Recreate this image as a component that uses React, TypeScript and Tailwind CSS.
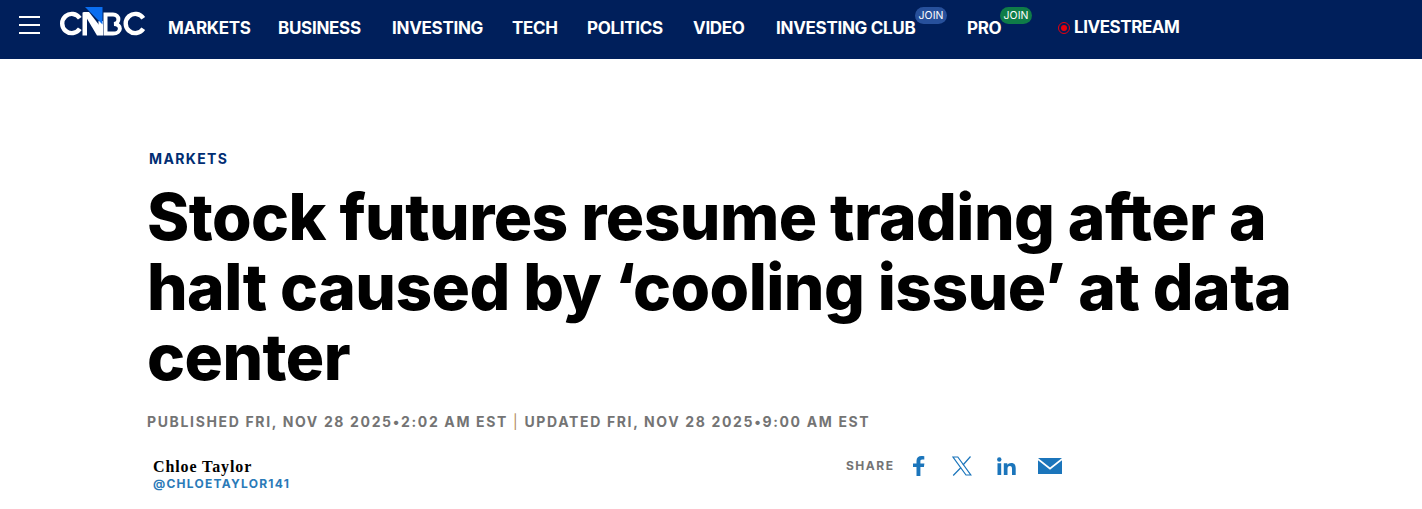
const navItems = [
  { label: 'MARKETS', width: 'w-[110px]' },
  { label: 'BUSINESS', width: 'w-[114px]' },
  { label: 'INVESTING', width: 'w-[120px]' },
  { label: 'TECH', width: 'w-[75px]' },
  { label: 'POLITICS', width: 'w-[106px]' },
  { label: 'VIDEO', width: 'w-[83px]' },
]

const JoinBadge = ({ color, className }: { color: string; className: string }) => (
  <span
    className={`absolute flex h-[17px] w-[32px] items-center justify-center rounded-full text-[10.500px] font-normal tracking-normal text-white ${color} ${className}`}
  >
    JOIN
  </span>
)

const Logo = () => (
  <svg width="87" height="29" viewBox="0 0 87 29">
    <path d="M20.800 11.200A9.600 9.600 0 1 0 20.800 21.800" fill="none" stroke="#fff" strokeWidth="4.400" />
    <path d="M23.500 5.500h4.500v23h-4.500z" fill="#fff" />
    <path d="M24 5h6l14 18v5.500h-6z" fill="#fff" />
    <path d="M39.500 14h4.500v14h-4.500z" fill="#fff" />
    <path d="M26 0h17.500v17.500z" fill="#0a6ef0" />
    <path
      d="M46.500 7.500h7.500c7 0 7 9 1 9.500c8 0 8 9.500 -1 9.500h-7.500z"
      fill="none"
      stroke="#fff"
      strokeWidth="4"
    />
    <path d="M84.300 11.200A9.600 9.600 0 1 0 84.300 21.800" fill="none" stroke="#fff" strokeWidth="4.400" />
  </svg>
)

const Header = () => (
  <header className="flex h-[59px] items-center bg-[#001f5b] pl-[19px] text-white">
    <div className="mb-[9px] flex w-[21px] flex-col gap-[6px]">
      <span className="h-[2px] bg-white" />
      <span className="h-[2px] bg-white" />
      <span className="h-[2px] bg-white" />
    </div>
    <div className="mb-[16px] ml-[19px] mr-[22px] flex">
      <Logo />
    </div>
    <nav className="flex items-center pb-[1px] text-[17px] font-bold tracking-[-0.3px]">
      {navItems.map((item) => (
        <a key={item.label} className={item.width}>
          {item.label}
        </a>
      ))}
      <a className="relative w-[191px]">
        INVESTING CLUB
        <JoinBadge color="bg-[#27509b]" className="left-[139px] top-[-9px]" />
      </a>
      <a className="relative w-[91px]">
        PRO
        <JoinBadge color="bg-[#0f7c48]" className="left-[33px] top-[-9px]" />
      </a>
      <a className="mt-[-3px] flex items-center gap-[4px] tracking-[-0.45px]">
        <span className="flex h-[12px] w-[12px] items-center justify-center rounded-full border border-[#e8000d]">
          <span className="h-[6px] w-[6px] rounded-full bg-[#e8000d]" />
        </span>
        LIVESTREAM
      </a>
    </nav>
  </header>
)

const ShareIcons = () => (
  <div className="flex items-center text-[#1b75bb]">
    <span className="ml-[18px] flex w-[14px] justify-center">
      <svg width="13" height="20" viewBox="0 0 13 20" fill="#1b75bb">
        <path d="M3.500 20V11H0V7.500h3.500V5c0-3.300 2-5 4.900-5 1.300 0 2.500.1 2.900.2v3.300H9.300C7.700 3.500 7.400 4.200 7.400 5.300v2.200h4l-.5 3.500H7.400v9z" />
      </svg>
    </span>
    <span className="ml-[26px] flex">
      <svg width="20" height="20" viewBox="0 0 20 20" fill="none" stroke="#1b75bb" strokeWidth="1.200">
        <path d="M1 1h4.800l13 18h-4.800z" />
        <path d="M18.500 0.500 11 9M9 11.500 1.200 19.500" />
      </svg>
    </span>
    <span className="ml-[25px] flex">
      <svg width="19" height="18" viewBox="0 0 19 18" fill="#1b75bb">
        <circle cx="2.300" cy="2.500" r="2.200" />
        <path d="M.500 6.200h3.700V18H.500zM6.800 6.200h3.500v1.600c.7-1.100 2.100-1.900 3.900-1.900 3.500 0 4.500 2.200 4.500 5.400V18H15v-5.900c0-1.700-.4-3-2.100-3-1.800 0-2.400 1.300-2.400 3V18H6.800z" />
      </svg>
    </span>
    <span className="ml-[22px] flex">
      <svg width="24" height="16" viewBox="0 0 24 16" fill="#1b75bb">
        <path d="M0 0h24L12 9.500z" />
        <path d="M0 2.200v13.800h24V2.200L12 11.700z" />
      </svg>
    </span>
  </div>
)

export default function App() {
  return (
    <div className="h-[509px] overflow-hidden bg-white font-['Inter',sans-serif]">
      <Header />
      <main className="pl-[147px]">
        <div className="pt-[91px] pl-[2px] text-[14px] leading-[17px] font-bold tracking-[1.35px] text-[#002d72]">
          MARKETS
        </div>
        <h1 className="mt-[15px] w-[1170px] text-[64px] leading-[70px] font-extrabold tracking-[-0.55px] text-black">
          Stock futures resume trading after a halt caused by ‘cooling issue’ at data center
        </h1>
        <div className="mt-[20px] flex text-[14px] leading-[20px] font-bold tracking-[1.65px] text-[#747474]">
          <span>PUBLISHED FRI, NOV 28 2025•2:02 AM EST</span>
          <span className="mx-[5px] font-normal text-[#b08a5a]">|</span>
          <span>UPDATED FRI, NOV 28 2025•9:00 AM EST</span>
        </div>
        <div className="mt-[26px] flex items-start pl-[6px]">
          <div className="w-[693px]">
            <div className="font-['Liberation_Serif',serif] text-[16px] leading-[17px] font-bold tracking-[0.9px] text-black">
              Chloe Taylor
            </div>
            <div className="text-[12px] leading-[17px] font-bold tracking-[1.25px] text-[#2a7ab8]">
              @CHLOETAYLOR141
            </div>
          </div>
          <div className="mt-[-2px] flex items-center">
            <span className="text-[12px] font-bold tracking-[1.5px] text-[#747474]">SHARE</span>
            <ShareIcons />
          </div>
        </div>
      </main>
    </div>
  )
}
